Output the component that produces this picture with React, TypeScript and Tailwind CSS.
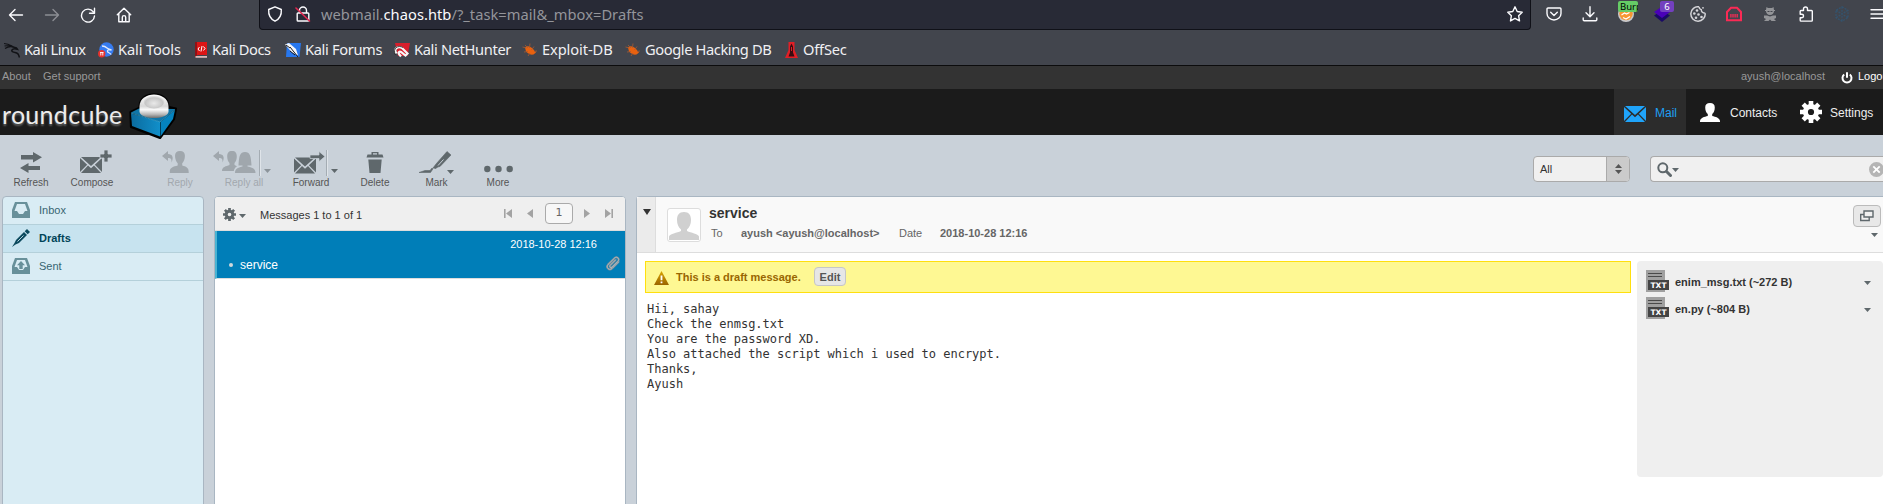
import React from "react";

const Caret = ({ className = "" }: { className?: string }) => (
  <svg viewBox="0 0 7 4" className={`block h-[4px] w-[7px] shrink-0 ${className}`}>
    <path d="M0 0h7L3.5 4z" fill="currentColor" />
  </svg>
);

const Gear = ({ className }: { className: string }) => (
  <svg viewBox="0 0 22 22" className={`block shrink-0 ${className}`} fill="none" stroke="currentColor">
    <circle cx="11" cy="11" r="5.6" strokeWidth="5" />
    <g strokeWidth="4.6">
      <path d="M11 0v4M11 18v4M0 11h4M18 11h4M3.2 3.2l2.9 2.9M15.9 15.9l2.9 2.9M3.2 18.8l2.9-2.9M15.9 6.1l2.9-2.9" />
    </g>
  </svg>
);

const envelope = (
  <>
    <path d="M1 0h20L11 9z" />
    <path d="M0 1l7.2 6.7L0 15zM22 1l-7.2 6.7L22 15z" />
    <path d="M8 8.6l3 2.6 3-2.6 7 7.4H1z" />
  </>
);

const person = <path d="M7 0c3 0 4.300 1.500 4.300 4.500 0 3-1 5.500-2.300 6.500v2c3 1 6.500 1.500 7 5v1H-2v-1c.5-3.500 4-4 7-5v-2C3.700 10 2.700 7.500 2.700 4.500 2.700 1.500 4 0 7 0z" />;

/* ---------- browser chrome ---------- */

const stroke = "block h-[16px] w-[16px] shrink-0 fill-none stroke-[#fbfbfe] [stroke-linecap:round] [stroke-linejoin:round] [stroke-width:1.4]";

function NavButtons() {
  return (
    <div className="flex w-[259px] shrink-0 items-start gap-[20px] pl-[8px] pt-[7px]">
      <svg viewBox="0 0 16 16" className={stroke}><path d="M1.500 8h13M7 2.500L1.500 8 7 13.500" /></svg>
      <svg viewBox="0 0 16 16" className={`${stroke} opacity-40`}><path d="M1.500 8h13M9 2.500L14.500 8 9 13.500" /></svg>
      <svg viewBox="0 0 16 16" className={stroke}><path d="M13.300 4.800A6.500 6.500 0 1 0 14.500 9M14.500 1.200v5h-5" /></svg>
      <svg viewBox="0 0 16 16" className={stroke}><path d="M1.300 7.800L8 1.200l6.700 6.600M2.800 6.500v8.200h10.400V6.500M6.300 14.500V10.300a1.700 1.700 0 0 1 3.400 0v4.200" /></svg>
    </div>
  );
}

function AddressBar() {
  return (
    <div className="flex h-[30px] w-[1272px] shrink-0 items-start rounded-b-[4px] border border-t-0 border-[#101118] bg-[#282a36] pl-[7px] pt-[6px]">
      <svg viewBox="0 0 16 16" className={stroke}><path d="M8 .8l6.300 2.700c.4 5-1.800 9.500-6.300 11.700C3.500 13 1.300 8.500 1.700 3.500z" /></svg>
      <svg viewBox="0 0 16 16" className={`${stroke} ml-[12px]`}>
        <path d="M4.500 7V4.500a3.500 3.500 0 0 1 7 0V7M3 7h10a.8.8 0 0 1 .8.8v6.400a.8.8 0 0 1-.8.8H3a.8.8 0 0 1-.8-.8V7.800A.8.8 0 0 1 3 7z" />
        <path d="M1 2l13.500 13" stroke="#e22850" strokeWidth="1.600" />
      </svg>
      <div className="-mt-[2px] ml-[10px] w-[600px] whitespace-nowrap font-['Noto_Sans'] text-[14.67px] leading-[20px] tracking-[0.04px] text-[#94959b]">
        webmail.<span className="text-[#fbfbfe]">chaos.htb</span>/?_task=mail&amp;_mbox=Drafts
      </div>
      <svg viewBox="0 0 16 16" className={`${stroke} ml-auto mr-[7px]`}><path d="M8 .8l2.200 4.700 5 .7-3.600 3.500.9 5.200L8 12.400l-4.500 2.500.9-5.200L.8 6.200l5-.7z" /></svg>
    </div>
  );
}

function Extensions() {
  return (
    <div className="flex shrink-0 items-start gap-[20px] pl-[15px] pt-[6px]">
      <svg viewBox="0 0 16 16" className={stroke}><path d="M2 2h12a1 1 0 0 1 1 1v4.500a7 6.500 0 0 1-14 0V3a1 1 0 0 1 1-1zM4.700 6.300L8 9.500l3.300-3.200" /></svg>
      <svg viewBox="0 0 16 16" className={stroke}><path d="M8 .8v9.700M4 6.700l4 4 4-4M1.200 12v1.800a1 1 0 0 0 1 1h11.600a1 1 0 0 0 1-1V12" /></svg>
      <div className="relative h-[16px] w-[16px]">
        <svg viewBox="0 0 16 16" className="block h-[16px] w-[16px]">
          <circle cx="8" cy="8" r="8" fill="#c9c9cc" /><circle cx="8" cy="7.500" r="6.700" fill="#f79632" />
          <path d="M3.500 9l3-2 2 1 3-1.500M5 11.500l3 1.500 4-2.500" stroke="#fff" fill="none" strokeWidth="1.300" />
        </svg>
        <span className="absolute -top-[5px] left-0 h-[11px] w-[20px] overflow-hidden whitespace-nowrap rounded-[2px] bg-[#66cc66] pl-[2px] font-['Noto_Sans'] text-[9.500px] leading-[11px] text-black">Burp</span>
      </div>
      <div className="relative h-[16px] w-[16px]">
        <svg viewBox="0 0 16 16" className="block h-[16px] w-[16px]"><path d="M0 9.500l8-5 8 5-8 6.500z" fill="#1a0a66" /><path d="M0 6l8-5.500L16 6l-8 6z" fill="#4a00b8" /></svg>
        <span className="absolute -top-[5px] left-[6px] h-[11px] w-[14px] rounded-[2px] bg-[#7340bf] text-center font-['Noto_Sans'] text-[9.500px] leading-[11px] text-white">6</span>
      </div>
      <svg viewBox="0 0 16 16" className="block h-[16px] w-[16px]">
        <path d="M9 .8a7.200 7.200 0 1 0 6.200 6.500M9 .8c.2 1.800.8 2.600 2.200 2.900.2 2 1.500 3.300 4 3.600" fill="none" stroke="#d4d4d8" strokeWidth="1.500" />
        <g fill="#d4d4d8"><circle cx="7" cy="4.500" r="1.300" /><circle cx="4.300" cy="7.500" r="1.300" /><circle cx="8.500" cy="8.500" r="1.300" /><circle cx="6" cy="11.800" r="1.300" /><circle cx="11.500" cy="11" r="1.300" /><circle cx="13" cy="1.800" r=".9" /></g>
      </svg>
      <svg viewBox="0 0 16 16" className="block h-[16px] w-[16px]">
        <path d="M1 14.300V6l4-4.300h6L15 6v8.300z" fill="none" stroke="#fb2a55" strokeWidth="2" />
        <path d="M4.900 8v3.500M7 8v3.500M9.100 8v3.500M11.200 8v3.500" stroke="#fb2a55" strokeWidth="1.300" />
      </svg>
      <svg viewBox="0 0 16 16" className="block h-[16px] w-[16px] fill-[#939498]">
        <path d="M4.500 1L6 2h4l1.500-1 .5 3h1v1h-1c0 2-1.500 4-4 4S4 7 4 5H3V4h1z" />
        <path d="M2 9.500h3l3 1 3-1h3V12l-2 1 2 2H9.500L8 13.500 6.500 15H2l2-2-2-1z" />
        <path d="M5.500 5h2v1h-2zM8.500 5h2v1h-2z" fill="#42454d" />
      </svg>
      <svg viewBox="0 0 16 16" className={stroke}><path d="M5.500 4.500V3a2 2 0 0 1 4 0v1.500h4a.8.8 0 0 1 .8.8v9a.8.8 0 0 1-.8.8H3a.8.8 0 0 1-.8-.8v-2.500h1.600a1.700 1.700 0 0 0 0-3.500H2.200V5.300a.8.8 0 0 1 .8-.8z" /></svg>
      <svg viewBox="0 0 16 16" className="block h-[16px] w-[16px] fill-none stroke-[#34536d] [stroke-width:1.3]"><path d="M8 .8l6 3.500v7.400l-6 3.500-6-3.500V4.300zM2 4.300l12 7.400M14 4.300L2 11.700M8 .8v14.400" strokeDasharray="2 1" /></svg>
      <svg viewBox="0 0 16 16" className={stroke}><path d="M1 3.700h14M1 8h14M1 12.300h14" /></svg>
    </div>
  );
}

const bug = (
  <svg viewBox="0 0 16 16" className="block h-[16px] w-[16px] shrink-0">
    <path d="M3 5.500C5 3.500 8 4 11 7l3 3.500-2.500 2C9 13 6 12 4 9.500z" fill="#e8610f" />
    <path d="M.5 5l4 1M2 10l4-.5M8 1.500L7.500 6M12 4.500L9.500 8M3 3l3 3M6 14l2-3M15 9l-3 .5" stroke="#a85a30" strokeWidth=".8" />
  </svg>
);

const bookmarks: { label: string; box: string; icon: React.ReactNode }[] = [
  { label: "Kali Linux", box: "w-[94px] tracking-[-0.45px]", icon: (
    <svg viewBox="0 0 16 16" className="block h-[16px] w-[16px] shrink-0 fill-none stroke-[#111216]">
      <path d="M0 1.500c3 .3 5 1 7.500 2.500M1 6.500C4 4.500 6.500 4.300 9 5M.5 4c2.500-.5 4-.3 6 0" strokeWidth="1.200" />
      <path d="M6 3.500c2.500.5 3 2 5 2 1.500 0 2 .8 2.500 1.800-2-.6-4.500-.8-5.500.7-.8 1.500 1 2.300 3 2.500 2.300.3 4 2 4.300 5" strokeWidth="1.500" />
    </svg>
  ) },
  { label: "Kali Tools", box: "w-[94px] tracking-[-0.15px]", icon: (
    <svg viewBox="0 0 16 16" className="block h-[16px] w-[16px] shrink-0"><circle cx="8.500" cy="7.500" r="7.200" fill="#367bf0" /><path d="M4 4c3 0 4 1 5 2s3 1 4.500 2c-3-.5-4.500 0-4 1.500s2.500 1 3.500 3" stroke="#dfe9fb" strokeWidth="1.300" fill="none" /><circle cx="3.700" cy="11.800" r="3.700" fill="#e5322d" /><path d="M2 10.500h3.500M2.800 10.500v3M4.800 10.500v3" stroke="#fff" strokeWidth=".9" /></svg>
  ) },
  { label: "Kali Docs", box: "w-[93px] tracking-[-0.4px]", icon: (
    <svg viewBox="0 0 16 16" className="block h-[16px] w-[16px] shrink-0"><path d="M3.500 0H15v13H3.500z" fill="#dc1515" /><path d="M3 0h2v15H3z" fill="#8f1216" /><path d="M3.500 14h11.500v1.800H3.500z" fill="#d8b8b8" /><path d="M7.500 5L6 7l1.500 2M11.500 4.500L13 6.500l-1.500 2M10 4L9 9.500" stroke="#fff" fill="none" /></svg>
  ) },
  { label: "Kali Forums", box: "w-[109px] tracking-[-0.35px]", icon: (
    <svg viewBox="0 0 16 16" className="block h-[16px] w-[16px] shrink-0"><path d="M2 1h14l-1.500 14H1z" fill="#2777ee" /><path d="M0 2.500L4 1l7 6 2 6.500-6-3z" fill="#f5f7fa" /><path d="M5 5l8 10M1 3l4 3M5 9l5 4" stroke="#15181f" strokeWidth="1" /></svg>
  ) },
  { label: "Kali NetHunter", box: "w-[128px] tracking-[-0.35px]", icon: (
    <svg viewBox="0 0 16 16" className="block h-[16px] w-[16px] shrink-0"><path d="M1 1h15l-2.500 13H4z" fill="#d81e2c" /><path d="M2.500 11.500C-1 7 4 3.500 8 6l5.500 5.500-2 2L7 10c-1.500-1-3 .5-2 2l2 2.500" stroke="#f7f7f7" strokeWidth="2.200" fill="none" /><path d="M1.500 13C-2 6.500 4 2.500 9 5.500" stroke="#222" strokeWidth=".8" fill="none" /></svg>
  ) },
  { label: "Exploit-DB", box: "w-[103px] tracking-[-0.1px]", icon: bug },
  { label: "Google Hacking DB", box: "w-[158px] tracking-[-0.4px]", icon: bug },
  { label: "OffSec", box: "w-[80px] tracking-[-0.2px]", icon: (
    <svg viewBox="0 0 16 16" className="block h-[16px] w-[16px] shrink-0"><path d="M5.500 0h6v8l3.500 8H2l3.500-8z" fill="#e01f26" /><path d="M8.500 1.500l1.500 3v6l1.500 4h-6L7 10.500v-6z" fill="#3a0c10" /><path d="M8 5h1v4H8z" fill="#e01f26" /></svg>
  ) },
];

function BrowserChrome() {
  return (
    <div className="h-[66px] border-b border-[#0c0c0d] bg-[#42454d]">
      <div className="flex h-[30px]">
        <NavButtons />
        <AddressBar />
        <Extensions />
      </div>
      <div className="flex h-[35px] pl-[4px] pt-[12px]">
        {bookmarks.map((b) => (
          <div key={b.label} className={`flex shrink-0 gap-[4px] ${b.box}`}>
            {b.icon}
            <span className="-mt-[3px] whitespace-nowrap font-['Noto_Sans'] text-[14.67px] leading-[20px] text-[#f0f0f3]">{b.label}</span>
          </div>
        ))}
      </div>
    </div>
  );
}

/* ---------- roundcube header ---------- */

function TopLine() {
  return (
    <div className="flex h-[23px] bg-[#333] pt-[2px] text-[11px] leading-[17px] text-[#999]">
      <span className="ml-[2px] w-[41px]">About</span>
      <span>Get support</span>
      <span className="ml-auto w-[100px] shrink-0">ayush@localhost</span>
      <div className="flex w-[42px] shrink-0 overflow-hidden text-white">
        <svg viewBox="0 0 12 12" className="mt-[4px] block h-[12px] w-[12px] shrink-0 fill-none stroke-white [stroke-width:2]"><path d="M3.200 2.500a4.500 4.500 0 1 0 5.600 0M6 .3v5.400" /></svg>
        <span className="ml-[5px]">Logout</span>
      </div>
    </div>
  );
}

function Logo() {
  return (
    <div className="flex h-[46px] w-[190px]">
      <span className="ml-[2px] mt-[10px] w-[127px] whitespace-nowrap font-['Lato'] text-[25px] leading-[30px] tracking-[0.3px] text-[#ececec] [text-shadow:0_2px_2px_#666]">roundcube</span>
      <svg viewBox="0 0 48 48" className="relative mt-[3px] block h-[48px] w-[48px] shrink-0">
        <defs>
          <linearGradient id="ball" x1="0" x2="0" y1="0" y2="1"><stop offset="0" stopColor="#fff" /><stop offset=".5" stopColor="#d8d8d8" /><stop offset=".65" stopColor="#fafafa" /><stop offset=".85" stopColor="#b5b5b5" /><stop offset="1" stopColor="#6f6f6f" /></linearGradient>
          <radialGradient id="cap" cx=".5" cy=".6" r=".6"><stop offset="0" stopColor="#e9e9e9" /><stop offset=".7" stopColor="#c6c6c6" /><stop offset="1" stopColor="#f4f4f4" /></radialGradient>
          <linearGradient id="side" x1="0" x2="1"><stop offset="0" stopColor="#0b6b9e" /><stop offset="1" stopColor="#118fca" /></linearGradient>
        </defs>
        <path d="M1.500 20L10 16l30-1 7 1.500L45 27 31 46 2 35z" fill="#000" stroke="#000" strokeWidth="2.200" strokeLinejoin="round" />
        <path d="M9.500 14C10-3 40-3 40.500 14v7h-31z" fill="#000" />
        <path d="M2 20.500l8-4 36 .5-15 13z" fill="#0f76a9" />
        <path d="M2 21.500l29 8.500v14.500L3 34z" fill="url(#side)" />
        <path d="M31.500 30L46 18 44 27 31.500 44.500z" fill="#0583bf" />
        <path d="M2 21l29 9L46 17.500" fill="none" stroke="#3fb0df" strokeWidth=".7" />
        <path d="M10.500 14C11-1.500 39-1.500 39.500 14v6c-2 8-27 8-29 0z" fill="url(#ball)" />
        <ellipse cx="25" cy="10" rx="10.500" ry="6.500" fill="url(#cap)" />
      </svg>
    </div>
  );
}

function Header() {
  return (
    <div className="flex h-[46px] bg-[#1b1b1b] text-[12px] leading-[16px] text-[#eee]">
      <Logo />
      <div className="ml-auto flex w-[72px] bg-[#2c2c2c] pl-[10px] text-[#1ea0f5]">
        <svg viewBox="0 0 22 16" className="mt-[17px] block h-[16px] w-[22px] shrink-0 fill-[#1fa4fb]">{envelope}</svg>
        <span className="ml-[9px] mt-[16px]">Mail</span>
      </div>
      <div className="flex w-[114px] pl-[14px]">
        <svg viewBox="-2 0 18 19" preserveAspectRatio="none" className="mt-[14px] block h-[19px] w-[20px] shrink-0 fill-white">{person}</svg>
        <span className="ml-[10px] mt-[16px]">Contacts</span>
      </div>
      <div className="flex w-[83px]">
        <Gear className="mt-[12px] h-[22px] w-[22px] text-white" />
        <span className="ml-[8px] mt-[16px]">Settings</span>
      </div>
    </div>
  );
}

/* ---------- toolbar ---------- */

const Separator = ({ className }: { className: string }) => (
  <span className={`absolute top-[15px] h-[26px] w-[2px] border-l border-[#a4acb3] bg-[#dfe4e9] ${className}`} />
);

function ToolButton({ label, width, disabled, children, extra }: { label: string; width: string; disabled?: boolean; children: React.ReactNode; extra?: React.ReactNode }) {
  return (
    <div className={`relative flex shrink-0 flex-col items-center pt-[15px] ${width} ${disabled ? "text-[#a2a8ae]" : "text-[#555]"}`}>
      <div className={`flex h-[24px] ${disabled ? "text-[#a0a7ad]" : "text-[#5f686c]"}`}>{children}</div>
      <span className="mt-[2px] whitespace-nowrap text-[10px] leading-[14px]">{label}</span>
      {extra}
    </div>
  );
}

function Toolbar() {
  return (
    <div className="flex h-[61px]">
      <ToolButton label="Refresh" width="w-[62px]">
        <svg viewBox="0 0 22 24" className="h-[24px] w-[22px]" fill="currentColor"><path d="M1 5h12V2l9 5.200L13 12.500v-3H1zM20 16H8.500v-3L0 18l8.500 5v-3H20z" /></svg>
      </ToolButton>
      <ToolButton label="Compose" width="w-[60px]">
        <svg viewBox="0 0 32 24" className="ml-[8px] h-[24px] w-[32px]" fill="currentColor"><g transform="translate(0 7)">{envelope}</g><path d="M24 0h4v4h4v4h-4v4h-4V8h-4V4h4z" stroke="#c9d1d9" strokeWidth=".8" /></svg>
      </ToolButton>
      <div className="w-[28px] shrink-0" />
      <ToolButton label="Reply" width="w-[60px]" disabled>
        <svg viewBox="0 0 30 24" className="-ml-[6px] h-[24px] w-[30px]" fill="currentColor"><path d="M0 6l6-5v3c4.500 0 6 3.500 3.500 8.500C9.800 9 9 8 6 8v3z" /><g transform="translate(9 1) scale(1.22 1.16)"><path d="M7.400 0c2.700 0 4 1.500 4 4.200 0 3-1 5.300-2.200 6.300v2c3 1 5.300 1.500 5.300 5.500v1H-1v-1c0-4 3-4.500 6.500-5.500v-2C4.300 9.500 3.300 7 3.300 4.200 3.300 1.500 4.700 0 7.400 0z" /></g></svg>
      </ToolButton>
      <ToolButton label="Reply all" width="w-[68px]" disabled extra={<><Separator className="left-[49px]" /><Caret className="absolute left-[54px] top-[34px] text-[#8c949a]" /></>}>
        <svg viewBox="0 0 43 24" className="-ml-[20px] h-[24px] w-[43px]" fill="currentColor">
          <path d="M0 6l6-5v3c4.500 0 6 3.500 3.500 8.500C9.800 9 9 8 6 8v3z" />
          <path d="M19 1c3.500 0 4.800 2 4.800 5.500 0 2.500-.8 5-2.300 6.500v2l2.500 1.300c-2 1.200-3 3-3.200 4.700H9c0-4.500 4-4.500 7.500-6v-2C15 11.500 14.200 9 14.200 6.500 14.200 3 15.500 1 19 1z" />
          <path d="M32 2c5 0 6 4 6.500 13.500H34.500v1c4 1 8 1.500 8 6.500H22c0-5 4-5.500 7.500-6.500v-1h-4C26 6 27 2 32 2z" />
        </svg>
      </ToolButton>
      <ToolButton label="Forward" width="w-[66px]" extra={<><Separator className="left-[48px]" /><Caret className="absolute left-[53px] top-[34px] text-[#5f686c]" /></>}>
        <svg viewBox="0 0 31 24" className="-ml-[4px] h-[24px] w-[31px]" fill="currentColor"><g transform="translate(0 7.500)">{envelope}</g><path d="M16 5h9V1.500l6 5-6 5V8.500h-9z" stroke="#c9d1d9" strokeWidth=".7" /></svg>
      </ToolButton>
      <ToolButton label="Delete" width="w-[62px]">
        <svg viewBox="0 0 18 24" className="h-[24px] w-[18px]" fill="currentColor"><path d="M1.500 4.500h4V2h7v2.500h4L17.500 7.500H.5zM7 3.300v1.200h4V3.300zM2.300 9.500h13.400L14.500 23h-11z" fillRule="evenodd" /></svg>
      </ToolButton>
      <ToolButton label="Mark" width="w-[61px]" extra={<Caret className="absolute left-[41px] top-[35px] text-[#5f686c]" />}>
        <svg viewBox="0 0 32 24" className="ml-[-4px] h-[24px] w-[32px]" fill="currentColor"><path d="M28 1.500L32 5 21 16.500c-1.500.3-3 .6-4 2l-3-.5 3-4zM14 18.800l-2.500 3.700H0L6 20.500h5l2-2.500z" stroke="currentColor" strokeWidth=".6" /><path d="M19 15.500L24.500 9.500" stroke="#c9d1d9" strokeWidth="1" /></svg>
      </ToolButton>
      <ToolButton label="More" width="w-[62px]">
        <svg viewBox="0 0 29 24" className="h-[24px] w-[29px]" fill="currentColor"><circle cx="3.300" cy="19" r="3.200" /><circle cx="14.500" cy="19" r="3.200" /><circle cx="25.700" cy="19" r="3.200" /></svg>
      </ToolButton>
      <div className="ml-auto mt-[21px] flex h-[26px] w-[97px] shrink-0 overflow-hidden rounded-[4px] border border-[#aaa] bg-[#f0f0f0]">
        <span className="grow pl-[6px] pt-[4px] text-[11px] leading-[16px] text-[#333]">All</span>
        <span className="flex w-[23px] flex-col items-center justify-center gap-[2px] border-l border-[#aaa] bg-[#cbcbcb] text-[#555]">
          <Caret className="rotate-180" />
          <Caret />
        </span>
      </div>
      <div className="ml-[20px] mt-[21px] flex h-[26px] w-[233px] shrink-0 overflow-hidden rounded-l-[4px] border border-r-0 border-[#aaa] bg-[#f0f0f0] text-[#5f686c]">
        <svg viewBox="0 0 15 15" className="ml-[6px] mt-[5px] block h-[15px] w-[15px] fill-none stroke-current"><circle cx="5.800" cy="5.800" r="4.500" strokeWidth="2" /><path d="M9.500 9.500l4 4" strokeWidth="3" strokeLinecap="round" /></svg>
        <Caret className="mt-[11px]" />
        <svg viewBox="0 0 14 14" className="-mr-[1px] ml-auto mt-[5px] block h-[15px] w-[15px] shrink-0"><circle cx="7" cy="7" r="7" fill="#b5b5b5" /><path d="M4 4l6 6M10 4l-6 6" stroke="#fff" strokeWidth="1.700" /></svg>
      </div>
    </div>
  );
}

/* ---------- panels ---------- */

function Folders() {
  const row = "flex h-[28px] border-b border-[#b4d0da] pl-[9px] text-[11px] leading-[16px]";
  return (
    <div className="h-[320px] w-[202px] shrink-0 rounded-t-[4px] border border-[#a9b6c2] bg-[#d9ecf4] text-[#376572]">
      <div className={row}>
        <svg viewBox="0 0 18 16" className="mt-[5px] block h-[16px] w-[18px] fill-[#68909a]"><path fillRule="evenodd" d="M3 0h12l3 8v8H0V8zM5 2L2.500 9H5l2 3h4l2-3h2.500L13 2z" /></svg>
        <span className="ml-[9px] mt-[5px]">Inbox</span>
      </div>
      <div className={`${row} bg-[#c7e3ef] font-bold text-[#004458]`}>
        <svg viewBox="0 0 18 18" className="mt-[4px] block h-[18px] w-[18px] fill-[#0c4a5e]"><path d="M15 0l3 3-2.300 2.300-3-3zM12 3l3 3L7 14l-3.500 1.500L0 18l2.500-4L4 11z" /><path d="M5.500 12.500l6-6" stroke="#c7e3ef" strokeWidth=".9" /></svg>
        <span className="ml-[9px] mt-[5px]">Drafts</span>
      </div>
      <div className={row}>
        <svg viewBox="0 0 18 16" className="mt-[5px] block h-[16px] w-[18px] fill-[#68909a]"><path fillRule="evenodd" d="M3 0h12l3 8v8H0V8zM5 2L2.500 9H5l2 3h4l2-3h2.500L13 2z" /><path d="M9 3l4 4.300h-2.300V11H7.300V7.300H5z" /></svg>
        <span className="ml-[9px] mt-[5px]">Sent</span>
      </div>
    </div>
  );
}

const clip = "M10.500 5L5 10.500c-1 1.200.8 2.800 2 1.700l6-6c2-2.200-1-5.300-3.300-3.300L3 9.500c-2.500 3 1.200 6.500 4 4l6.500-6.500";

function MessageList() {
  return (
    <div className="ml-[10px] h-[320px] w-[412px] shrink-0 overflow-hidden rounded-t-[4px] border border-[#a9b6c2] bg-white">
      <div className="flex h-[34px] border-b border-[#ddd] bg-[#efefef] text-[11px] text-[#333]">
        <Gear className="ml-[8px] mt-[11px] h-[13px] w-[13px] text-[#5f686c]" />
        <Caret className="ml-[3px] mt-[17px] text-[#5f686c]" />
        <span className="ml-[14px] mt-[10px] whitespace-nowrap leading-[16px]">Messages 1 to 1 of 1</span>
        <div className="ml-auto flex text-[#a3a3a3]">
          <svg viewBox="0 0 8 9" className="mt-[12px] block h-[9px] w-[8px] fill-current"><path d="M0 0h1.600v9H0zM8 0v9L2 4.500z" /></svg>
          <svg viewBox="0 0 6 9" className="ml-[15px] mt-[12px] block h-[9px] w-[6px] fill-current"><path d="M6 0v9L0 4.500z" /></svg>
          <span className="ml-[12px] mt-[6px] h-[21px] w-[28px] rounded-[4px] border border-[#aaa] bg-[#f7f7f7] text-center font-['DejaVu_Sans'] text-[11px] leading-[18px] text-[#666]">1</span>
          <svg viewBox="0 0 6 9" className="ml-[11px] mt-[12px] block h-[9px] w-[6px] fill-current"><path d="M0 0v9l6-4.500z" /></svg>
          <svg viewBox="0 0 8 9" className="ml-[15px] mr-[12px] mt-[12px] block h-[9px] w-[8px] fill-current"><path d="M6.400 0H8v9H6.400zM0 0v9l6-4.500z" /></svg>
        </div>
      </div>
      <div className="flex h-[48px] flex-col border-b border-l-2 border-b-[#ddd] border-l-[#49b3d2] bg-[#007eb8] text-white">
        <span className="ml-auto mr-[28px] mt-[5px] text-[11px] leading-[16px]">2018-10-28 12:16</span>
        <div className="mt-[3px] flex">
          <span className="ml-[12px] mt-[8px] h-[4px] w-[4px] rounded-full bg-[#cfd8dc]" />
          <span className="ml-[7px] mt-[2px] text-[12px] leading-[16px]">service</span>
          <svg viewBox="0 0 16 16" className="ml-auto mr-[4px] block h-[16px] w-[16px] fill-none [stroke-linecap:round]">
            <path d={clip} stroke="#7f8d96" strokeWidth="1.900" />
            <path d={clip} stroke="#b9c2c6" strokeWidth=".8" />
          </svg>
        </div>
      </div>
    </div>
  );
}

const txtIcon = (
  <svg viewBox="0 0 23 22" className="block h-[22px] w-[23px] shrink-0">
    <path d="M0 0h19v22H0z" fill="#a0a0a0" />
    <path d="M2 3.500h14M2 6.500h14" stroke="#4a4a4a" />
    <path d="M2 10h21v10H2z" fill="#444" />
    <text x="4.500" y="18" fill="#fff" fontFamily="DejaVu Sans" fontWeight="bold" fontSize="7.500" textLength="16" lengthAdjust="spacingAndGlyphs">TXT</text>
  </svg>
);

function MessageView() {
  return (
    <div className="ml-[10px] flex h-[320px] w-[1247px] shrink-0 flex-col rounded-tl-[4px] border border-r-0 border-[#a9b6c2] bg-white">
      <div className="flex h-[56px] border-b border-[#ddd] bg-[#f9f9f9] text-[11px] leading-[16px] text-[#666]">
        <div className="w-[19px] shrink-0 rounded-tl-[3px] border-r border-[#ddd] bg-[#ebebeb] pl-[6px] pt-[12px]">
          <svg viewBox="0 0 8 6" className="block h-[6px] w-[8px]"><path d="M0 0h8L4 6z" fill="#333" /></svg>
        </div>
        <div className="ml-[11px] mt-[11px] h-[34px] w-[34px] shrink-0 rounded-[3px] border border-[#ddd] bg-white p-[1px]">
          <svg viewBox="0 0 30 30" className="block h-[30px] w-[30px] fill-[#d0d0d0]"><path d="M15 2c5 0 7 3 7 8 0 4-1.500 7.500-4 9.500v1.500c4 2 11 2.500 12 5.500v3.500H0v-3.500C1 23.500 8 23 12 21v-1.500C9.500 17.500 8 14 8 10c0-5 2-8 7-8z" /></svg>
        </div>
        <div className="ml-[8px] mt-[7px]">
          <div className="text-[14px] font-bold leading-[18px] text-[#333]">service</div>
          <div className="mt-[3px] flex whitespace-nowrap pl-[2px] leading-[16px]">
            <span className="w-[30px]">To</span>
            <span className="w-[158px] font-bold">ayush &lt;ayush@localhost&gt;</span>
            <span className="w-[41px]">Date</span>
            <span className="font-bold">2018-10-28 12:16</span>
          </div>
        </div>
        <div className="ml-auto mr-[2px] flex flex-col items-end pt-[8px] text-[#5f686c]">
          <div className="flex h-[22px] w-[28px] items-center justify-center rounded-[4px] border border-[#bbb] bg-[#e8e8e8]">
            <svg viewBox="0 0 14 12" className="block h-[12px] w-[14px] fill-[#f0f0f0] stroke-current [stroke-width:1.4]"><path d="M.7 4.500h8.500v6H.7z" /><path d="M4 1h9v6H4z" /></svg>
          </div>
          <Caret className="mr-[3px] mt-[6px]" />
        </div>
      </div>
      <div className="flex pl-[8px] pt-[8px]">
        <div className="w-[986px] shrink-0">
          <div className="flex h-[32px] border border-[#ffdf0e] bg-[#fef893] text-[11px] font-bold leading-[16px] text-[#960]">
            <svg viewBox="0 0 15 14" className="ml-[8px] mt-[9px] block h-[14px] w-[15px]"><defs><linearGradient id="warn" x1="0" x2="0" y1="0" y2="1"><stop offset="0" stopColor="#d9a300" /><stop offset="1" stopColor="#9a6400" /></linearGradient></defs><path d="M7.500 0L15 14H0z" fill="url(#warn)" /><path d="M7.500 4.500v4.800M7.500 10.500v1.800" stroke="#fff" strokeWidth="1.800" /></svg>
            <span className="ml-[7px] mt-[7px] w-[138px]">This is a draft message.</span>
            <span className="mt-[5px] h-[19px] w-[32px] rounded-[4px] border border-[#c6c6c6] bg-[#e6e6e6] pt-px text-center text-[#555]">Edit</span>
          </div>
          <pre className="ml-[2px] mt-[9px] font-['DejaVu_Sans_Mono'] text-[12px] leading-[15px] text-[#333]">{`Hii, sahay
Check the enmsg.txt
You are the password XD.
Also attached the script which i used to encrypt.
Thanks,
Ayush`}</pre>
        </div>
        <div className="ml-[6px] h-[216px] w-[246px] shrink-0 rounded-[4px] bg-[#efefef] pl-[9px] pt-[9px] text-[11px] font-bold text-[#333]">
          {["enim_msg.txt (~272 B)", "en.py (~804 B)"].map((name) => (
            <div key={name} className="flex h-[27px]">
              {txtIcon}
              <span className="ml-[6px] mt-[4px] whitespace-nowrap leading-[16px]">{name}</span>
              <Caret className="ml-auto mr-[12px] mt-[11px] text-[#5f686c]" />
            </div>
          ))}
        </div>
      </div>
    </div>
  );
}

export default function App() {
  return (
    <div className="h-[504px] w-[1883px] overflow-hidden bg-[#c9d1d9] font-['Liberation_Sans',sans-serif]">
      <BrowserChrome />
      <TopLine />
      <Header />
      <Toolbar />
      <div className="flex pl-[2px]">
        <Folders />
        <MessageList />
        <MessageView />
      </div>
    </div>
  );
}
